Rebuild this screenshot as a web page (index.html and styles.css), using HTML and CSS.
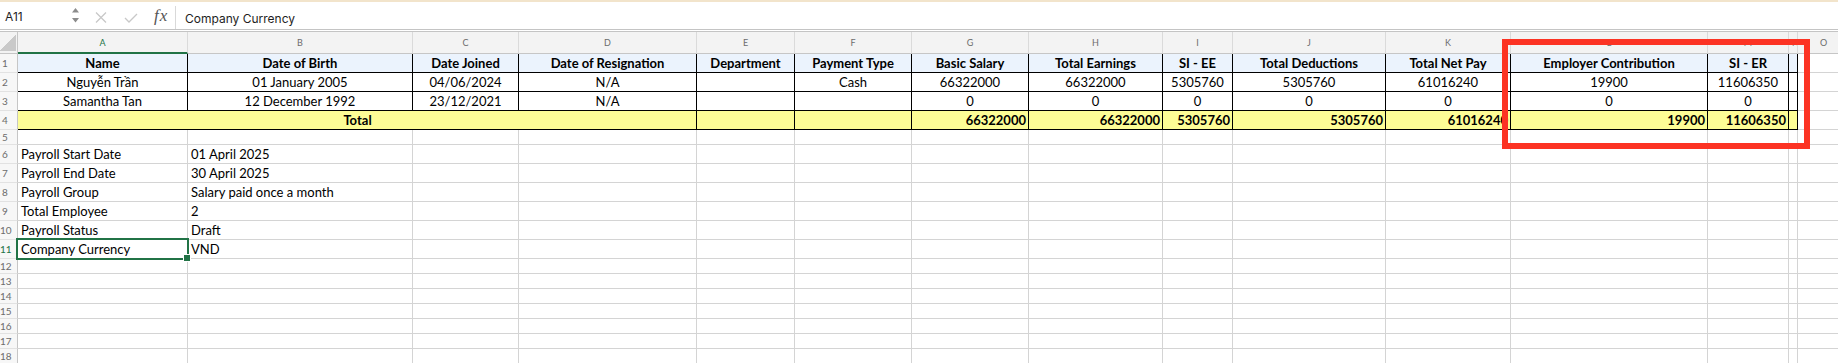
FILE: index.html
```html
<!DOCTYPE html>
<html lang="en">

<head>
    <meta charset="UTF-8">
    <meta name="viewport" content="width=device-width, initial-scale=1.0">
    <title>Payroll Export</title>
    <link rel="stylesheet" href="styles.css">
</head>

<body>
    <div class="sheet">
        <div class="formula-bar">
            <div class="name-box">A11</div>
            <svg class="spinner" width="7" height="15" viewBox="0 0 7 15">
                <path d="M3.5 0 L7 4.5 H0 Z M0 10 H7 L3.5 14.5 Z" fill="#8c8c8c" />
            </svg>
            <svg class="fb-icon cancel" width="12" height="11" viewBox="0 0 12 11">
                <path d="M1 0.5 L11 10.5 M11 0.5 L1 10.5" stroke="#c8c8c8" stroke-width="1.3" fill="none" />
            </svg>
            <svg class="fb-icon confirm" width="14" height="10" viewBox="0 0 14 10">
                <path d="M1 5 L5 9 L13 1" stroke="#c8c8c8" stroke-width="1.3" fill="none" />
            </svg>
            <span class="fx">fx</span>
            <div class="formula">Company Currency</div>
        </div>

        <div class="grid">
            <div class="row head">
                <div class="corner"></div>
                <div class="active">A</div><div>B</div><div>C</div><div>D</div><div>E</div><div>F</div><div>G</div>
                <div>H</div><div>I</div><div>J</div><div>K</div><div>L</div><div>M</div><div>N</div><div>O</div>
            </div>

            <div class="row table-head">
                <div class="rh">1</div>
                <div class="t">Name</div>
                <div class="t">Date of Birth</div>
                <div class="t">Date Joined</div>
                <div class="t">Date of Resignation</div>
                <div class="t">Department</div>
                <div class="t">Payment Type</div>
                <div class="t">Basic Salary</div>
                <div class="t">Total Earnings</div>
                <div class="t">SI - EE</div>
                <div class="t">Total Deductions</div>
                <div class="t">Total Net Pay</div>
                <div class="t">Employer Contribution</div>
                <div class="t">SI - ER</div>
                <div class="t"></div>
                <div></div>
            </div>

            <div class="row table-body">
                <div class="rh">2</div>
                <div class="t">Nguyễn Trần</div>
                <div class="t">01 January 2005</div>
                <div class="t">04/06/2024</div>
                <div class="t">N/A</div>
                <div class="t"></div>
                <div class="t">Cash</div>
                <div class="t">66322000</div>
                <div class="t">66322000</div>
                <div class="t">5305760</div>
                <div class="t">5305760</div>
                <div class="t">61016240</div>
                <div class="t">19900</div>
                <div class="t">11606350</div>
                <div class="t"></div>
                <div></div>
            </div>

            <div class="row table-body">
                <div class="rh">3</div>
                <div class="t">Samantha Tan</div>
                <div class="t">12 December 1992</div>
                <div class="t">23/12/2021</div>
                <div class="t">N/A</div>
                <div class="t"></div>
                <div class="t"></div>
                <div class="t">0</div>
                <div class="t">0</div>
                <div class="t">0</div>
                <div class="t">0</div>
                <div class="t">0</div>
                <div class="t">0</div>
                <div class="t">0</div>
                <div class="t"></div>
                <div></div>
            </div>

            <div class="row table-total">
                <div class="rh">4</div>
                <div class="t merged">Total</div>
                <div class="t"></div>
                <div class="t"></div>
                <div class="t num">66322000</div>
                <div class="t num">66322000</div>
                <div class="t num">5305760</div>
                <div class="t num">5305760</div>
                <div class="t num">61016240</div>
                <div class="t num">19900</div>
                <div class="t num">11606350</div>
                <div class="t"></div>
                <div></div>
            </div>

            <div id="info-rows"></div>
        </div>

        <div class="callout"></div>
    </div>

    <script>
        const info = [
            null,
            ['Payroll Start Date', '01 April 2025'],
            ['Payroll End Date', '30 April 2025'],
            ['Payroll Group', 'Salary paid once a month'],
            ['Total Employee', '2'],
            ['Payroll Status', 'Draft'],
            ['Company Currency', 'VND'],
            null, null, null, null, null, null, null
        ];
        const COLS = 15;

        const container = document.getElementById('info-rows');
        info.forEach((item, i) => {
            const rowNum = i + 5;
            const row = document.createElement('div');
            row.className = item ? 'row' : 'row short';

            const rh = document.createElement('div');
            rh.className = 'rh';
            rh.textContent = rowNum;
            row.appendChild(rh);

            for (let c = 0; c < COLS; c++) {
                const cell = document.createElement('div');
                if (item && c < 2) cell.textContent = item[c];
                row.appendChild(cell);
            }

            // selected cell A11
            if (rowNum === 11) {
                rh.classList.add('active');
                row.children[1].classList.add('sel');
            }
            container.appendChild(row);
        });
    </script>
</body>

</html>
```

FILE: styles.css
```css
* {
    box-sizing: border-box;
}

body {
    margin: 0;
    width: 1838px;
    height: 363px;
    overflow: hidden;
    background: #ffffff;
    font-family: Lato, "Liberation Sans", sans-serif;
    color: #000000;
}

.sheet {
    position: relative;
}

/* formula bar */
.formula-bar {
    height: 32px;
    display: flex;
    align-items: center;
    border-top: 2px solid #f2e4cb;
    border-bottom: 3px double #c4c4c4;
    font-family: Inter, "Liberation Sans", sans-serif;
    font-size: 12px;
    color: #1e1e1e;
}

.name-box {
    width: 72px;
    padding-left: 5px;
    margin-top: 2px;
}

.spinner {
    flex: none;
    margin-top: 0;
}

.fb-icon {
    flex: none;
    margin-top: 4px;
}

.cancel {
    margin-left: 16px;
}

.confirm {
    margin-left: 17px;
}

.fx {
    margin-left: 16px;
    width: 21px;
    font-family: "Liberation Serif", serif;
    font-style: italic;
    font-size: 17px;
    letter-spacing: 1px;
    color: #555555;
}

.formula {
    align-self: stretch;
    display: flex;
    align-items: center;
    padding: 2px 0 0 9px;
    margin: 4px 0 0;
    border-left: 1px solid #d9d9d9;
    flex: 1;
}

/* grid */
.grid {
    --cols: 18px 170px 225px 106px 178px 98px 117px 117px 134px 70px 153px 125px 197px 81px 9px 52px;
}

.row {
    display: grid;
    grid-template-columns: var(--cols);
    height: 19px;
}

.row.short {
    height: 15px;
}

.row > div {
    border-right: 1px solid #d4d4d4;
    border-bottom: 1px solid #d4d4d4;
    padding: 0 3px;
    font-size: 13px;
    line-height: 18px;
    white-space: nowrap;
    overflow: hidden;
}

.row.head {
    height: 22px;
    background: #f3f3f3;
}

.row.head > div {
    border-bottom-color: #c6c6c6;
    border-right-color: #dadada;
    font-size: 9px;
    line-height: 21px;
    text-align: center;
    color: #6c6c6c;
}

.row.head > .active {
    color: #217346;
    border-bottom: 2px solid #217346;
}

.row.head > .corner {
    background: linear-gradient(to bottom right, transparent 50%, #c9c9c9 50%) no-repeat;
    background-size: 16px 16px;
    background-position: 0 3px;
    border-right-color: #c6c6c6;
}

.row > .rh {
    background: #f7f7f7;
    border-right-color: #c6c6c6;
    border-bottom-color: #e2e2e2;
    padding: 0 7px 0 0;
    font-size: 10px;
    text-align: center;
    color: #6c6c6c;
}

.row.short > div {
    line-height: 14px;
}

.row > .rh.active {
    color: #217346;
}

/* payroll table */
.row > .t {
    border-right-color: #000000;
    border-bottom-color: #000000;
    text-align: center;
}

.table-head > .t {
    background: #ebf3fd;
    font-weight: 700;
}

.table-total > .t {
    background: #fdfd96;
    font-weight: 700;
    text-align: right;
    padding-right: 2px;
}

.table-total > .merged {
    grid-column: span 4;
    text-align: center;
}

/* selected cell */
.row > .sel {
    position: relative;
    overflow: visible;
}

.sel::after {
    content: "";
    position: absolute;
    top: -2px;
    left: -2px;
    right: -2px;
    bottom: -2px;
    border: 2px solid #217346;
}

.sel::before {
    content: "";
    position: absolute;
    right: -4px;
    bottom: -4px;
    width: 6px;
    height: 6px;
    background: #217346;
    border: 1px solid #ffffff;
    z-index: 1;
}

/* red highlight drawn over the sheet */
.callout {
    position: absolute;
    left: 1502px;
    top: 39px;
    width: 308px;
    height: 110px;
    border: 6px solid #fc3323;
}
```
